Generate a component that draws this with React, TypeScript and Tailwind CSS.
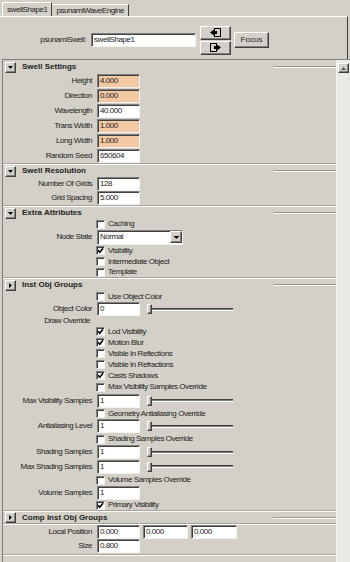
import React from 'react';

// Classic raised / sunken bevels
const raised =
  'border border-t-white border-l-white border-r-[#404040] border-b-[#404040] shadow-[inset_-1px_-1px_0_#808080]';
const sunken =
  'border border-t-[#808080] border-l-[#808080] border-r-[#f4f2ee] border-b-[#f4f2ee] shadow-[inset_1px_1px_0_#404040]';

const Field: React.FC<{ value: string; orange?: boolean; w?: string }> = ({
  value,
  orange,
  w = 'w-[43px]',
}) => (
  <div
    className={`${w} h-[14px] ${sunken} ${orange ? 'bg-[#f2c9a3]' : 'bg-white'} flex items-center pl-[2px] whitespace-nowrap overflow-hidden`}
  >
    {value}
  </div>
);

const Slider: React.FC = () => (
  <div className="flex items-center ml-[7px]">
    <div className={`w-[5px] h-[10px] bg-[#d4d0c8] ${raised}`} />
    <div className="w-[81px] h-[3px] border-t border-t-[#404040] border-b border-b-white bg-[#808080]" />
  </div>
);

const Check: React.FC<{ checked?: boolean }> = ({ checked }) => (
  <div className={`w-[9px] h-[9px] bg-white ${sunken} flex items-center justify-center`}>
    {checked && (
      <svg width="7" height="7" viewBox="0 0 7 7">
        <path d="M1 3.2 L2.8 5.2 L6 1.2" stroke="#000" strokeWidth="1.6" fill="none" />
      </svg>
    )}
  </div>
);

const Label: React.FC<{ text?: string }> = ({ text }) => (
  <div className="w-[94px] shrink-0 text-right pr-[5px] whitespace-nowrap">{text}</div>
);

const FieldRow: React.FC<{ h: string; label: string; value: string; orange?: boolean; slider?: boolean }> = ({
  h,
  label,
  value,
  orange,
  slider,
}) => (
  <div className={`${h} flex items-center`}>
    <Label text={label} />
    <Field value={value} orange={orange} />
    {slider && <Slider />}
  </div>
);

const CheckRow: React.FC<{ h: string; label: string; checked?: boolean }> = ({ h, label, checked }) => (
  <div className={`${h} flex items-center`}>
    <div className="w-[93px] shrink-0" />
    <Check checked={checked} />
    <span className="ml-[3px] whitespace-nowrap">{label}</span>
  </div>
);

const Header: React.FC<{ h: string; title: string; open?: boolean }> = ({ h, title, open = true }) => (
  <div className={`${h} flex items-center`}>
    <div className={`ml-[2px] w-[11px] h-[11px] bg-[#d4d0c8] ${raised} flex items-center justify-center`}>
      <svg width="7" height="7" viewBox="0 0 7 7">
        {open ? <polygon points="1,2 6,2 3.5,5" fill="#000" /> : <polygon points="2,1 2,6 5,3.5" fill="#000" />}
      </svg>
    </div>
    <span className="ml-[6px] font-bold tracking-normal text-[8px] whitespace-nowrap">{title}</span>
    <div className="flex-1" />
    <div className="w-[63px] h-[2px] border-t border-t-[#9a968e] border-b border-b-white" />
  </div>
);

const Sep: React.FC = () => <div className="h-[2px] border-t border-t-[#a8a49c] border-b border-b-white" />;

export default function App() {
  return (
    <div className="w-[350px] h-[562px] bg-[#d4d0c8] overflow-hidden text-[8px] leading-none tracking-[-0.45px] text-[#1c1c1c] font-['Liberation_Sans',Arial,sans-serif] flex flex-col">
      {/* Tabs */}
      <div className="h-[16px] flex items-end pl-[2px] shrink-0">
        <div className="h-[14px] px-[4px] flex items-center border-t border-l border-t-white border-l-white border-r border-r-[#404040] bg-[#d4d0c8]">
          swellShape1
        </div>
        <div className="h-[12px] px-[4px] flex items-center border-t border-t-white border-r border-r-[#404040]">
          psunamiWaveEngine
        </div>
      </div>

      {/* Node name row */}
      <div className="h-[43px] shrink-0 border-t border-t-white border-r border-r-[#404040] mr-[2px] flex items-center pt-[4px]">
        <div className="w-[91px] text-right pr-[5px]">psunamiSwell:</div>
        <Field value="swellShape1" w="w-[105px]" />
        <div className="ml-[4px] flex flex-col gap-[1px]">
          <div className={`w-[31px] h-[14px] ${raised} flex items-center justify-center`}>
            <svg width="11" height="9" viewBox="0 0 11 9">
              <rect x="4.5" y="0.5" width="6" height="8" fill="none" stroke="#000" />
              <polygon points="0,4.5 4,1.5 4,3 7,3 7,6 4,6 4,7.5" fill="#000" />
            </svg>
          </div>
          <div className={`w-[31px] h-[14px] ${raised} flex items-center justify-center`}>
            <svg width="11" height="9" viewBox="0 0 11 9">
              <rect x="0.5" y="0.5" width="6" height="8" fill="none" stroke="#000" />
              <polygon points="11,4.5 7,1.5 7,3 4,3 4,6 7,6 7,7.5" fill="#000" />
            </svg>
          </div>
        </div>
        <div className={`ml-[3px] w-[35px] h-[16px] ${raised} flex items-center justify-center tracking-normal`}>Focus</div>
      </div>

      {/* Scroll frame */}
      <div className="flex-1 ml-[2px] border-t border-l border-[#808080] flex min-h-0">
        <div className="flex-1 flex flex-col pt-[1px]">
          <Header h="h-[12px]" title="Swell Settings" />
          <FieldRow h="h-[15px]" label="Height" value="4.000" orange />
          <FieldRow h="h-[15px]" label="Direction" value="0.000" orange />
          <FieldRow h="h-[15px]" label="Wavelength" value="40.000" />
          <FieldRow h="h-[15px]" label="Trans Width" value="1.000" orange />
          <FieldRow h="h-[15px]" label="Long Width" value="1.000" orange />
          <FieldRow h="h-[15px]" label="Random Seed" value="650604" />
          <Sep />
          <Header h="h-[12px]" title="Swell Resolution" />
          <FieldRow h="h-[14px]" label="Number Of Grids" value="128" />
          <FieldRow h="h-[14px]" label="Grid Spacing" value="5.000" />
          <Sep />
          <Header h="h-[12px]" title="Extra Attributes" />
          <CheckRow h="h-[10px]" label="Caching" />
          <div className="h-[16px] flex items-center">
            <Label text="Node State" />
            <div className={`w-[86px] h-[15px] bg-white ${sunken} flex items-center pl-[2px]`}>
              <span className="flex-1">Normal</span>
              <div className={`w-[12px] h-[12px] bg-[#d4d0c8] ${raised} flex items-center justify-center`}>
                <svg width="7" height="5" viewBox="0 0 7 5">
                  <polygon points="0.5,1 6.5,1 3.5,4" fill="#000" />
                </svg>
              </div>
            </div>
          </div>
          <CheckRow h="h-[11px]" label="Visibility" checked />
          <CheckRow h="h-[11px]" label="Intermediate Object" />
          <CheckRow h="h-[10px]" label="Template" />
          <Sep />
          <Header h="h-[12px]" title="Inst Obj Groups" open={false} />
          <CheckRow h="h-[11px]" label="Use Object Color" />
          <FieldRow h="h-[14px]" label="Object Color" value="0" slider />
          <div className="h-[10px] flex items-center">
            <div className="w-[92px] text-right pr-[5px]">Draw Override</div>
          </div>
          <CheckRow h="h-[11px]" label="Lod Visibility" checked />
          <CheckRow h="h-[11px]" label="Motion Blur" checked />
          <CheckRow h="h-[11px]" label="Visible In Reflections" />
          <CheckRow h="h-[11px]" label="Visible In Refractions" />
          <CheckRow h="h-[11px]" label="Casts Shadows" checked />
          <CheckRow h="h-[12px]" label="Max Visibility Samples Override" />
          <FieldRow h="h-[15px]" label="Max Visibility Samples" value="1" slider />
          <CheckRow h="h-[11px]" label="Geometry Antialiasing Override" />
          <FieldRow h="h-[14px]" label="Antialiasing Level" value="1" slider />
          <CheckRow h="h-[12px]" label="Shading Samples Override" />
          <FieldRow h="h-[14px]" label="Shading Samples" value="1" slider />
          <FieldRow h="h-[15px]" label="Max Shading Samples" value="1" slider />
          <CheckRow h="h-[12px]" label="Volume Samples Override" />
          <FieldRow h="h-[14px]" label="Volume Samples" value="1" />
          <CheckRow h="h-[10px]" label="Primary Visibility" checked />
          <Sep />
          <Header h="h-[11px]" title="Comp Inst Obj Groups" open={false} />
          <Sep />
          <div className="h-[14px] flex items-center">
            <Label text="Local Position" />
            <Field value="0.000" />
            <div className="ml-[3px]">
              <Field value="0.000" w="w-[45px]" />
            </div>
            <div className="ml-[3px]">
              <Field value="0.000" w="w-[46px]" />
            </div>
          </div>
          <FieldRow h="h-[14px]" label="Size" value="0.800" />
          <div className="h-[1px]" />
          <Sep />
        </div>

        {/* Scrollbar */}
        <div className="w-[14px] shrink-0 bg-[#ebe9e4] border-l border-l-[#f6f5f2] pt-[3px] pl-[1px]">
          <div className={`w-[11px] h-[10px] bg-[#d4d0c8] ${raised} flex items-center justify-center`}>
            <svg width="5" height="3" viewBox="0 0 5 3">
              <polygon points="0,3 5,3 2.5,0" fill="#555" />
            </svg>
          </div>
        </div>
      </div>
    </div>
  );
}
